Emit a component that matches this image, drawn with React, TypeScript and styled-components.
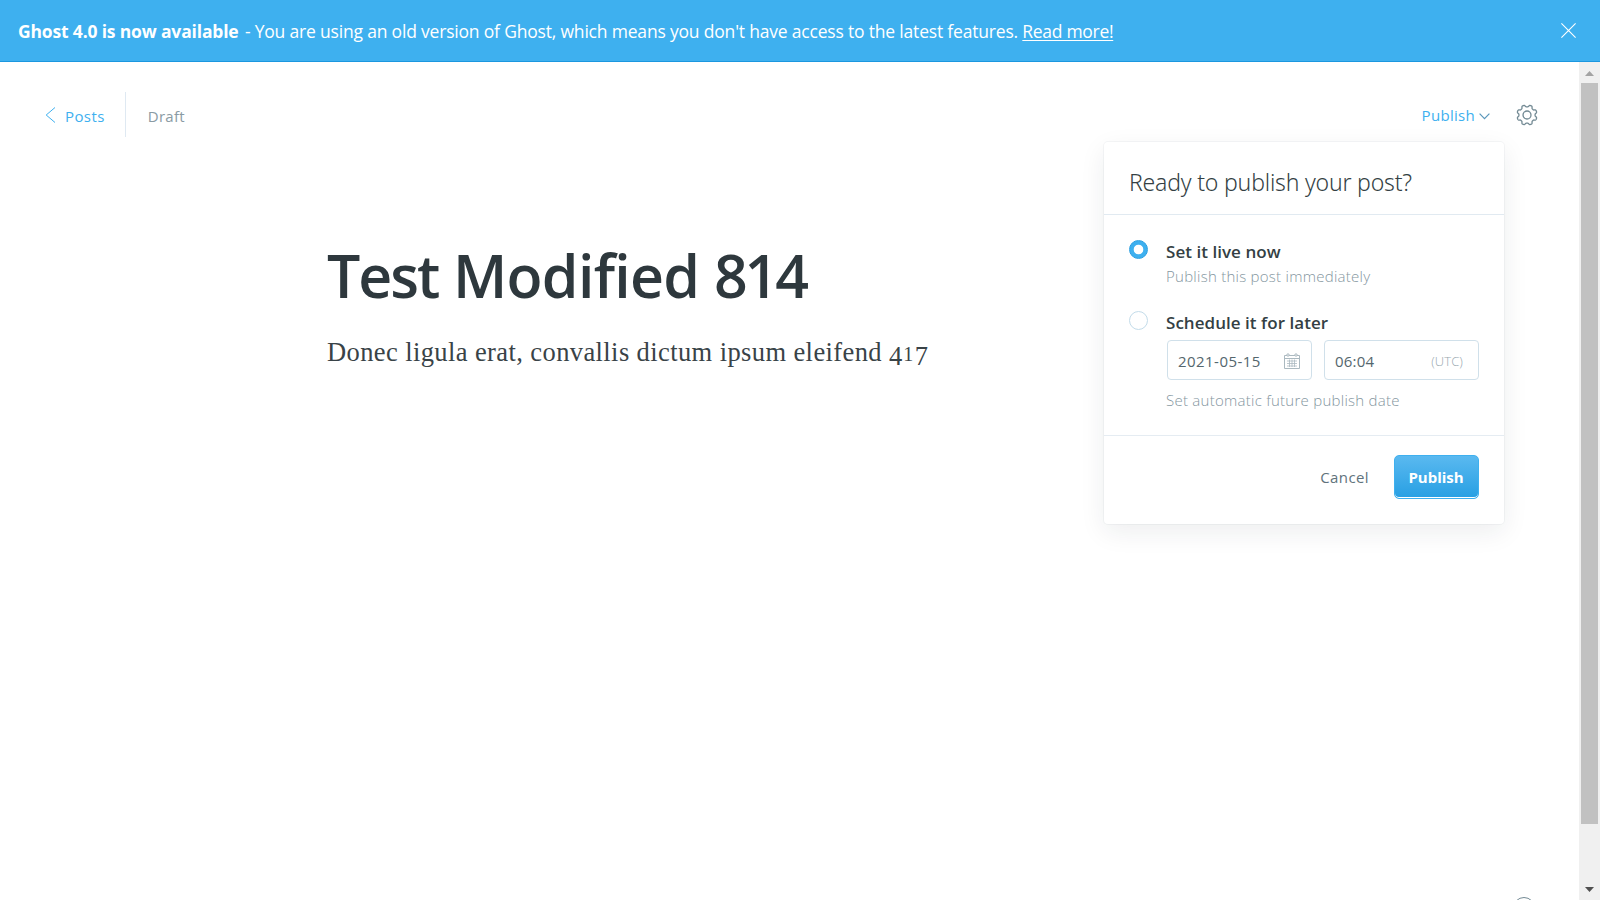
import styled, { createGlobalStyle, css } from "styled-components";

const GlobalStyle = createGlobalStyle`
  *, *::before, *::after { box-sizing: border-box; }
  html, body { margin: 0; padding: 0; overflow: hidden; }
  body {
    background: #fff;
    color: #343f44;
    font-family: "Open Sans", "Noto Sans", sans-serif;
    font-size: 15px;
  }
`;

const Screen = styled.div`
  position: relative;
  display: flex;
  flex-direction: column;
  width: 1600px;
  height: 900px;
  overflow: hidden;
`;

const Banner = styled.header`
  display: flex;
  align-items: center;
  justify-content: space-between;
  height: 62px;
  padding: 0 24px 0 18px;
  background: #3eb0ef;
  border-bottom: 1px solid #1c97df;
  color: #fff;
  font-size: 17.5px;
`;

const BannerText = styled.p`
  margin: 0;
  letter-spacing: -0.19px;
  white-space: pre;
`;

const BannerStrong = styled.strong`
  margin-right: 2px;
  font-weight: 700;
  letter-spacing: -0.17px;
`;

const BannerLink = styled.a`
  color: #fff;
  letter-spacing: -0.3px;
  text-decoration: underline;
  text-decoration-thickness: 1px;
  text-underline-offset: 2px;
`;

const CloseIcon = styled.svg`
  width: 15px;
  height: 15px;
`;

const Workspace = styled.div`
  display: flex;
  flex: 1;
  min-height: 0;
`;

const Editor = styled.main`
  flex: 1;
`;

const Toolbar = styled.nav`
  display: flex;
  align-items: center;
  justify-content: space-between;
  height: 105px;
  padding: 0 41px 0 45px;
`;

const ToolbarGroup = styled.div`
  display: flex;
  align-items: center;
`;

const BackLink = styled.a`
  display: flex;
  align-items: center;
  gap: 9px;
  height: 45px;
  padding-right: 20px;
  border-right: 1px solid #dfe9f2;
  color: #3eb0ef;
  letter-spacing: 0.4px;

  span { padding-top: 3px; }
`;

const Status = styled.span`
  padding: 3px 0 0 22px;
  color: #8a9ba4;
  letter-spacing: 0.3px;
`;

const PublishTrigger = styled.a`
  display: flex;
  align-items: center;
  gap: 4px;
  margin-right: 26px;
  color: #3eb0ef;
  letter-spacing: 0.3px;

  svg { margin-top: 3px; }
`;

const Article = styled.article`
  padding: 68px 0 0 327px;
`;

const Title = styled.h1`
  display: flex;
  gap: 14.5px;
  margin: 0;
  color: #2e383d;
  font-size: 59px;
  font-weight: 600;
  line-height: 80px;
`;

const TitleWord = styled.span<{ $spacing: number }>`
  letter-spacing: ${({ $spacing }) => $spacing}px;
`;

const Paragraph = styled.p`
  margin: 18px 0 0;
  color: #394347;
  font-family: "Liberation Serif", serif;
  font-size: 26.5px;
  letter-spacing: 0.4px;
  line-height: 38px;
`;

const Digit = styled.span<{ $low?: boolean }>`
  display: inline-block;
  width: 12.8px;
  letter-spacing: 0;
  line-height: 1;
  ${({ $low }) =>
    $low
      ? css`font-size: 26.5px; position: relative; top: 4px;`
      : css`font-size: 20px; padding-left: 1.5px;`}
`;

const Scrollbar = styled.div`
  display: flex;
  flex-direction: column;
  align-items: center;
  width: 21px;
  background: #f0f0f0;
`;

const ScrollArrow = styled.div<{ $down?: boolean }>`
  display: flex;
  align-items: center;
  justify-content: center;
  width: 21px;
  height: 21px;
  padding: ${({ $down }) => ($down ? "0" : "2px 0 0")};
`;

const ScrollThumb = styled.div`
  width: 17px;
  height: 741px;
  margin-bottom: auto;
  background: #c1c1c1;
`;

const Popover = styled.section`
  position: absolute;
  top: 142px;
  left: 1104px;
  width: 400px;
  height: 382px;
  background: #fff;
  border-radius: 4px;
  box-shadow: 0 0 0 1px rgba(99, 114, 130, 0.06), 0 8px 26px rgba(27, 39, 51, 0.08);
`;

const PopoverTitle = styled.h2`
  display: flex;
  align-items: center;
  height: 73px;
  margin: 0;
  padding: 7px 24px 0 25px;
  border-bottom: 1px solid #e1eaf1;
  font-family: "Noto Sans", "Open Sans", sans-serif;
  font-size: 23px;
  font-weight: 300;
  letter-spacing: -0.19px;
`;

const Options = styled.div`
  display: flex;
  flex-direction: column;
  gap: 23px;
  height: 221px;
  padding: 25px 25px 0;
  border-bottom: 1px solid #e5ecf2;
`;

const Option = styled.div`
  display: grid;
  grid-template-columns: 19px 1fr;
  column-gap: 19px;
`;

const Radio = styled.span<{ $checked?: boolean }>`
  width: 19px;
  height: 19px;
  border-radius: 50%;
  ${({ $checked }) =>
    $checked
      ? css`background: radial-gradient(circle, #fff 4.4px, #3eb0ef 5.2px); border: 1px solid #2a9fe2;`
      : css`background: #fff; border: 1px solid #c3dcea;`}
`;

const OptionLabel = styled.div`
  margin-left: -1px;
  padding-top: 1px;
  font-size: 17px;
  font-weight: 600;
  line-height: 22px;
  letter-spacing: 0.04px;
`;

const OptionHint = styled.div<{ $top: number }>`
  margin: ${({ $top }) => $top}px 0 0 -1px;
  color: #8496a0;
  font-weight: 300;
  letter-spacing: 0.26px;
  line-height: 23px;
`;

const Fields = styled.div`
  display: grid;
  grid-template-columns: 145px 155px;
  gap: 12px;
  margin-top: 6px;
`;

const Field = styled.div<{ $spacing: number }>`
  display: flex;
  align-items: center;
  justify-content: space-between;
  height: 40px;
  padding: 1px 11px 0 10px;
  border: 1px solid #d0e0ea;
  border-radius: 4px;
  color: #54666d;
  letter-spacing: ${({ $spacing }) => $spacing}px;
`;

const Zone = styled.span`
  padding-right: 4px;
  color: #98a7af;
  font-size: 13px;
  font-weight: 300;
  letter-spacing: 0.1px;
`;

const Footer = styled.footer`
  display: flex;
  align-items: center;
  justify-content: flex-end;
  gap: 24px;
  padding: 19px 25px 0;
`;

const CancelButton = styled.button`
  padding: 0 1px 1px 0;
  border: 0;
  background: none;
  color: #5f737c;
  font: 400 15px "Open Sans", sans-serif;
  letter-spacing: 0.4px;
`;

const PublishButton = styled.button`
  width: 85px;
  height: 44px;
  padding: 0 1px 1px 0;
  border: 1px solid #3eb0ef;
  border-radius: 5px;
  background: linear-gradient(#5ab9f0, #279fe3);
  box-shadow: inset 0 -1px 0 #fff;
  color: #fff;
  font: 700 15px "Open Sans", sans-serif;
`;

const HelpButton = styled.div`
  position: absolute;
  top: 897px;
  left: 1513px;
  width: 22px;
  height: 22px;
  border: 1.4px solid #738a94;
  border-radius: 50%;
`;

// Outline of an eight-toothed cog, with notches on the horizontal and vertical axes.
const cogOutline =
  Array.from({ length: 160 }, (_, i) => {
    const angle = (i / 160) * Math.PI * 2;
    const radius = 9.1 + 1.05 * Math.tanh(-2 * Math.cos(8 * angle));
    const x = 11 + radius * Math.cos(angle);
    const y = 11 + radius * Math.sin(angle);
    return `${i ? "L" : "M"}${x.toFixed(2)} ${y.toFixed(2)}`;
  }).join("") + "Z";

const Gear = () => (
  <svg width="22" height="22" viewBox="0 0 22 22" fill="none" stroke="#738a94" strokeWidth="1.3" strokeLinejoin="round">
    <path d={cogOutline} />
    <circle cx="11" cy="11" r="4" />
  </svg>
);

const Calendar = () => (
  <svg width="16" height="16" viewBox="0 0 16 16" fill="none" stroke="#abb9c0">
    <path d="M.5 2.5h15v13H.5zM.5 5.5h15" />
    <path d="M3 8h10M3 10.5h10M3 13h10M5.5 6.5V14M8 6.5V14M10.5 6.5V14" strokeWidth=".8" />
    <circle cx="4" cy="2" r="1.2" fill="#fff" />
    <circle cx="12" cy="2" r="1.2" fill="#fff" />
  </svg>
);

export default function App() {
  return (
    <Screen>
      <GlobalStyle />
      <Banner>
        <BannerText>
          <BannerStrong>Ghost 4.0 is now available</BannerStrong>
          {" - You are using an old version of Ghost, which means you don't have access to the latest features. "}
          <BannerLink>Read more!</BannerLink>
        </BannerText>
        <CloseIcon viewBox="0 0 15 15" stroke="#fff" strokeWidth="1.1">
          <path d="M.4.4l14.2 14.2M14.6.4L.4 14.6" />
        </CloseIcon>
      </Banner>
      <Workspace>
        <Editor>
          <Toolbar>
            <ToolbarGroup>
              <BackLink>
                <svg width="11" height="16" viewBox="0 0 11 16" fill="none" stroke="#3eb0ef" strokeWidth="1">
                  <path d="M10 .5L1.2 8l8.8 7.5" />
                </svg>
                <span>Posts</span>
              </BackLink>
              <Status>Draft</Status>
            </ToolbarGroup>
            <ToolbarGroup>
              <PublishTrigger>
                <span>Publish</span>
                <svg width="11" height="7" viewBox="0 0 11 7" fill="none" stroke="#5a97bb" strokeWidth="1.2">
                  <path d="M.6.7l4.9 5 4.9-5" />
                </svg>
              </PublishTrigger>
              <Gear />
            </ToolbarGroup>
          </Toolbar>
          <Article>
            <Title>
              <TitleWord $spacing={-2}>Test</TitleWord>
              <TitleWord $spacing={-0.7}>Modified</TitleWord>
              <TitleWord $spacing={-3}>814</TitleWord>
            </Title>
            <Paragraph>
              Donec ligula erat, convallis dictum ipsum eleifend <Digit $low>4</Digit><Digit>1</Digit><Digit $low>7</Digit>
            </Paragraph>
          </Article>
        </Editor>
        <Scrollbar>
          <ScrollArrow>
            <svg width="9" height="5" viewBox="0 0 9 5"><path d="M0 5L4.5 0 9 5z" fill="#a3a3a3" /></svg>
          </ScrollArrow>
          <ScrollThumb />
          <ScrollArrow $down>
            <svg width="9" height="5" viewBox="0 0 9 5"><path d="M0 0l4.5 5L9 0z" fill="#505050" /></svg>
          </ScrollArrow>
        </Scrollbar>
      </Workspace>
      <Popover>
        <PopoverTitle>Ready to publish your post?</PopoverTitle>
        <Options>
          <Option>
            <Radio $checked />
            <div>
              <OptionLabel>Set it live now</OptionLabel>
              <OptionHint $top={2}>Publish this post immediately</OptionHint>
            </div>
          </Option>
          <Option>
            <Radio />
            <div>
              <OptionLabel>Schedule it for later</OptionLabel>
              <Fields>
                <Field $spacing={0.45}>2021-05-15<Calendar /></Field>
                <Field $spacing={0.2}>06:04<Zone>(UTC)</Zone></Field>
              </Fields>
              <OptionHint $top={9}>Set automatic future publish date</OptionHint>
            </div>
          </Option>
        </Options>
        <Footer>
          <CancelButton>Cancel</CancelButton>
          <PublishButton>Publish</PublishButton>
        </Footer>
      </Popover>
      <HelpButton />
    </Screen>
  );
}
